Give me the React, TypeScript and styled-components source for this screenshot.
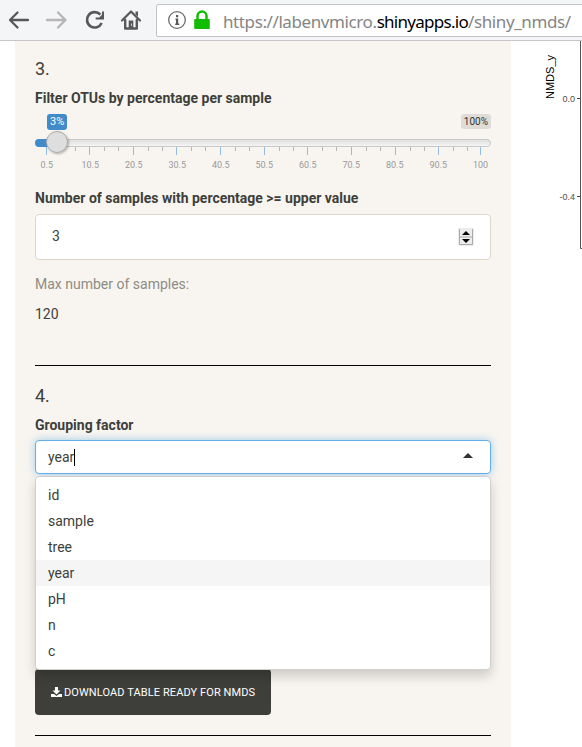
import React from 'react';
import styled, { createGlobalStyle } from 'styled-components';

const GlobalStyle = createGlobalStyle`
  * { box-sizing: border-box; }
  body {
    margin: 0;
    overflow: hidden;
    background: #fff;
    color: #3e3f3a;
    font: 14px/20px Roboto, sans-serif;
  }
`;

const Window = styled.div`
  width: 582px;
  height: 747px;
  overflow: hidden;
`;

const Toolbar = styled.header`
  display: flex;
  height: 41px;
  background: #f4f5f7;
  border-bottom: 1px solid #c6c6c8;
`;

const NavIcons = styled.svg`
  flex: none;
  width: 156px;
  height: 40px;
`;

const AddressBar = styled.div`
  display: flex;
  flex: none;
  width: 440px;
  height: 33px;
  margin-top: 4px;
  background: #fff;
  border: 1px solid #c4c4c6;
  border-radius: 2px;
`;

const AddressIcons = styled.svg`
  flex: none;
  width: 66px;
  height: 31px;
`;

const Url = styled.span`
  font: 17px/31px 'Noto Sans', sans-serif;
  letter-spacing: -0.4px;
  padding-top: 1px;
  color: #858585;
  white-space: nowrap;
`;

const Domain = styled.span`
  color: #000;
  letter-spacing: -0.72px;
`;

const Content = styled.main`
  display: flex;
  height: 706px;
`;

const Sidebar = styled.section`
  flex: none;
  width: 496px;
  margin-left: 15px;
  padding: 17px 20px 0;
  background: #f8f5f0;
`;

const StepTitle = styled.h4`
  margin: 0 0 8px;
  font-size: 18px;
  font-weight: 400;
  line-height: 22px;
`;

const Label = styled.label`
  display: block;
  height: 20px;
  font-weight: 700;
  white-space: nowrap;
`;

const Slider = styled.div`
  height: 79px;
  margin-bottom: 1px;
  padding-top: 6px;
`;

const BubbleRow = styled.div`
  display: flex;
  justify-content: space-between;
  height: 24px;
  padding-left: 12px;
`;

const Bubble = styled.span<{ $active?: boolean }>`
  height: ${p => (p.$active ? 16 : 15)}px;
  padding: 0 3px;
  border-radius: 3px;
  font-size: ${p => (p.$active ? 11 : 10)}px;
  line-height: ${p => (p.$active ? 16 : 15)}px;
  color: ${p => (p.$active ? '#fff' : '#333')};
  background: ${p => (p.$active ? '#428bca' : '#dfdcd7')};
`;

const Scale = styled.svg`
  display: block;
  width: 456px;
  height: 28px;
  overflow: visible;
`;

const ScaleLabels = styled.div`
  display: grid;
  grid-template-columns: repeat(10, 43.5px) 41px;
  margin: -7px 0 0 -10px;
  font-size: 9px;
  line-height: 12px;
  color: #999;
  text-align: center;
`;

const NumberField = styled.div`
  display: flex;
  align-items: center;
  justify-content: space-between;
  height: 46px;
  margin: 6px 0 14px;
  padding: 0 16px;
  background: #fff;
  border: 1px solid #dfd7ca;
  border-radius: 4px;
`;

const NumberValue = styled.span`
  padding-bottom: 2px;
`;

const Stepper = styled.svg`
  width: 16px;
  height: 18px;
`;

const Line = styled.p<{ $muted?: boolean }>`
  height: 20px;
  margin: 0 0 10px;
  color: ${p => (p.$muted ? '#8e8c84' : 'inherit')};
`;

const Divider = styled.hr<{ $top: number }>`
  height: 1px;
  margin: ${p => p.$top}px 0 19px;
  border: 0;
  background: #000;
`;

const SelectBox = styled.div`
  position: relative;
  margin-top: 5px;
`;

const SelectInput = styled.div`
  display: flex;
  align-items: center;
  height: 34px;
  padding: 0 16px 0 12px;
  background: #fff;
  border: 1px solid #66afe9;
  border-radius: 4px;
  box-shadow: 0 0 8px rgba(102, 175, 233, 0.6);
`;

const Caret = styled.span`
  width: 1px;
  height: 17px;
  background: #000;
`;

const Arrow = styled.svg`
  width: 10px;
  height: 5px;
  margin: 0 1px 3px auto;
`;

const Menu = styled.ul`
  position: absolute;
  top: 36px;
  left: 0;
  z-index: 1;
  width: 456px;
  height: 194px;
  margin: 0;
  padding: 5px 0;
  list-style: none;
  background: #fff;
  border: 1px solid #d2d0cc;
  border-radius: 4px;
  box-shadow: 0 6px 12px rgba(0, 0, 0, 0.175);
`;

const Option = styled.li<{ $selected?: boolean }>`
  height: 26px;
  padding: 3px 12px;
  background: ${p => (p.$selected ? '#f5f5f5' : '#fff')};
`;

const DownloadButton = styled.button`
  display: flex;
  align-items: center;
  width: 236px;
  height: 46px;
  margin: 195px 0 0;
  padding: 1px 0 0 16px;
  gap: 2px;
  color: #fff;
  background: #3e3f3a;
  border: 0;
  border-radius: 4px;
  font: 11px/20px Roboto, sans-serif;
  letter-spacing: 0.1px;
  white-space: nowrap;
`;

const Plot = styled.svg`
  flex: none;
  width: 71px;
  height: 706px;
  font-family: 'Liberation Sans', sans-serif;
`;

const majors = [11, 54, 98, 141, 185, 229, 272, 316, 360, 403, 445];
const minors = majors.slice(0, -1).flatMap(x => [x + 15, x + 29]);
const scaleValues = ['0.5', '10.5', '20.5', '30.5', '40.5', '50.5', '60.5', '70.5', '80.5', '90.5', '100'];
const options = ['id', 'sample', 'tree', 'year', 'pH', 'n', 'c'];

function BrowserBar() {
  return (
    <Toolbar>
      <NavIcons viewBox="0 0 156 40" fill="none" strokeLinecap="round" strokeLinejoin="round" strokeWidth="2.3">
        <path d="M28 20H10.5M17.5 12.5L10 20l7.500 7.500" stroke="#58585a" />
        <path d="M47 20h17.500M58 12.500L65.500 20 58 27.500" stroke="#b6b6b8" />
        <path d="M100.400 14.600A7.700 7.700 0 1 0 101.700 23" stroke="#58585a" strokeWidth="2.600" strokeLinecap="butt" />
        <path d="M104 11.500v8h-8.300v-2h3.500l2.800-2.800v-3.200z" fill="#58585a" />
        <path d="M122 20.500L131 11.500l9 9" stroke="#58585a" strokeWidth="2.200" />
        <path d="M135.500 11.500h2.500v5l-2.500-2z" fill="#58585a" />
        <path d="M125.200 20v8.500h11.600V20" stroke="#58585a" strokeWidth="2.400" />
        <path d="M128.700 29v-8.500h4.600V29z" fill="#58585a" />
        <path d="M131.500 24v1.500" stroke="#d0d0d2" strokeWidth="1" />
      </NavIcons>
      <AddressBar>
        <AddressIcons viewBox="0 0 66 31">
          <circle cx="20" cy="15" r="8.300" fill="none" stroke="#6c6c6e" strokeWidth="1.300" />
          <path d="M19 10h2.200v2.200H19zM18.500 13.500h2.700v5h1v1.500h-4v-1.500H19v-3.500h-.5z" fill="#58585a" />
          <path d="M40.500 15v-4a4.500 4.500 0 0 1 9 0v4" fill="none" stroke="#12bc00" strokeWidth="2.500" />
          <rect x="37.200" y="14" width="15.600" height="10" rx="1" fill="#12bc00" />
        </AddressIcons>
        <Url>https://labenvmicro.<Domain>shinyapps.io</Domain>/shiny_nmds/</Url>
      </AddressBar>
    </Toolbar>
  );
}

function PercentageSlider() {
  return (
    <Slider>
      <BubbleRow>
        <Bubble $active>3%</Bubble>
        <Bubble>100%</Bubble>
      </BubbleRow>
      <Scale viewBox="0 0 456 28">
        <defs>
          <linearGradient id="track" x2="0" y2="1">
            <stop stopColor="#dedede" />
            <stop offset="1" stopColor="#f7f7f7" />
          </linearGradient>
          <filter id="handleShadow" x="-50%" y="-50%" width="200%" height="200%">
            <feDropShadow dx="1" dy="1" stdDeviation="1.200" floodOpacity=".3" />
          </filter>
        </defs>
        {minors.map(x => <rect key={x} x={x} y="8" width="1" height="5" fill="#b9b7b3" />)}
        {majors.map(x => <rect key={x} x={x} y="8" width="1" height="9" fill="#92bce0" />)}
        <rect x=".5" y="1.500" width="455" height="7" rx="3.500" fill="url(#track)" stroke="#c9c9c9" />
        <path d="M22 1H4a4 4 0 0 0 0 8h18z" fill="#428bca" />
        <circle cx="22" cy="4" r="10.500" fill="#dedede" stroke="#aaa" filter="url(#handleShadow)" />
      </Scale>
      <ScaleLabels>{scaleValues.map(v => <span key={v}>{v}</span>)}</ScaleLabels>
    </Slider>
  );
}

export default function App() {
  return (
    <Window>
      <GlobalStyle />
      <BrowserBar />
      <Content>
        <Sidebar>
          <StepTitle>3.</StepTitle>
          <Label>Filter OTUs by percentage per sample</Label>
          <PercentageSlider />
          <Label>Number of samples with percentage &gt;= upper value</Label>
          <NumberField>
            <NumberValue>3</NumberValue>
            <Stepper viewBox="0 0 16 18">
              <path d="M0 0h16v18H0z" fill="#ededed" />
              <path d="M1.500 1v15.500h13V1M1 9h14" fill="none" stroke="#aaa" />
              <path d="M4 7h8L8 3zM4 11h8l-4 4z" fill="#000" />
            </Stepper>
          </NumberField>
          <Line $muted>Max number of samples:</Line>
          <Line>120</Line>
          <Divider $top={41} />
          <StepTitle>4.</StepTitle>
          <Label>Grouping factor</Label>
          <SelectBox>
            <SelectInput>
              year<Caret />
              <Arrow viewBox="0 0 10 5"><path d="M0 5l5-5 5 5z" fill="#333" /></Arrow>
            </SelectInput>
            <Menu>
              {options.map(o => <Option key={o} $selected={o === 'year'}>{o}</Option>)}
            </Menu>
          </SelectBox>
          <DownloadButton>
            <svg width="11" height="11" viewBox="0 0 11 11" fill="#fff">
              <path d="M4 0h3v3.500h2.500L5.500 7.500l-4-4H4z" />
              <path d="M0 7h3l2.500 2L8 7h3v3H0z" />
            </svg>
            DOWNLOAD TABLE READY FOR NMDS
          </DownloadButton>
          <Divider $top={20} />
        </Sidebar>
        <Plot viewBox="0 0 71 706">
          <path d="M69.500 0v207.500H71" fill="none" stroke="#555" />
          <path d="M66 57.500h3M66 155.500h3" stroke="#444" />
          <text transform="translate(43 58) rotate(-90)" fontSize="11" fill="#000">NMDS_y</text>
          <text x="64" y="61" fontSize="9" textAnchor="end" fill="#4d4d4d">0.0</text>
          <text x="64" y="159" fontSize="9" textAnchor="end" fill="#4d4d4d">-0.4</text>
        </Plot>
      </Content>
    </Window>
  );
}
